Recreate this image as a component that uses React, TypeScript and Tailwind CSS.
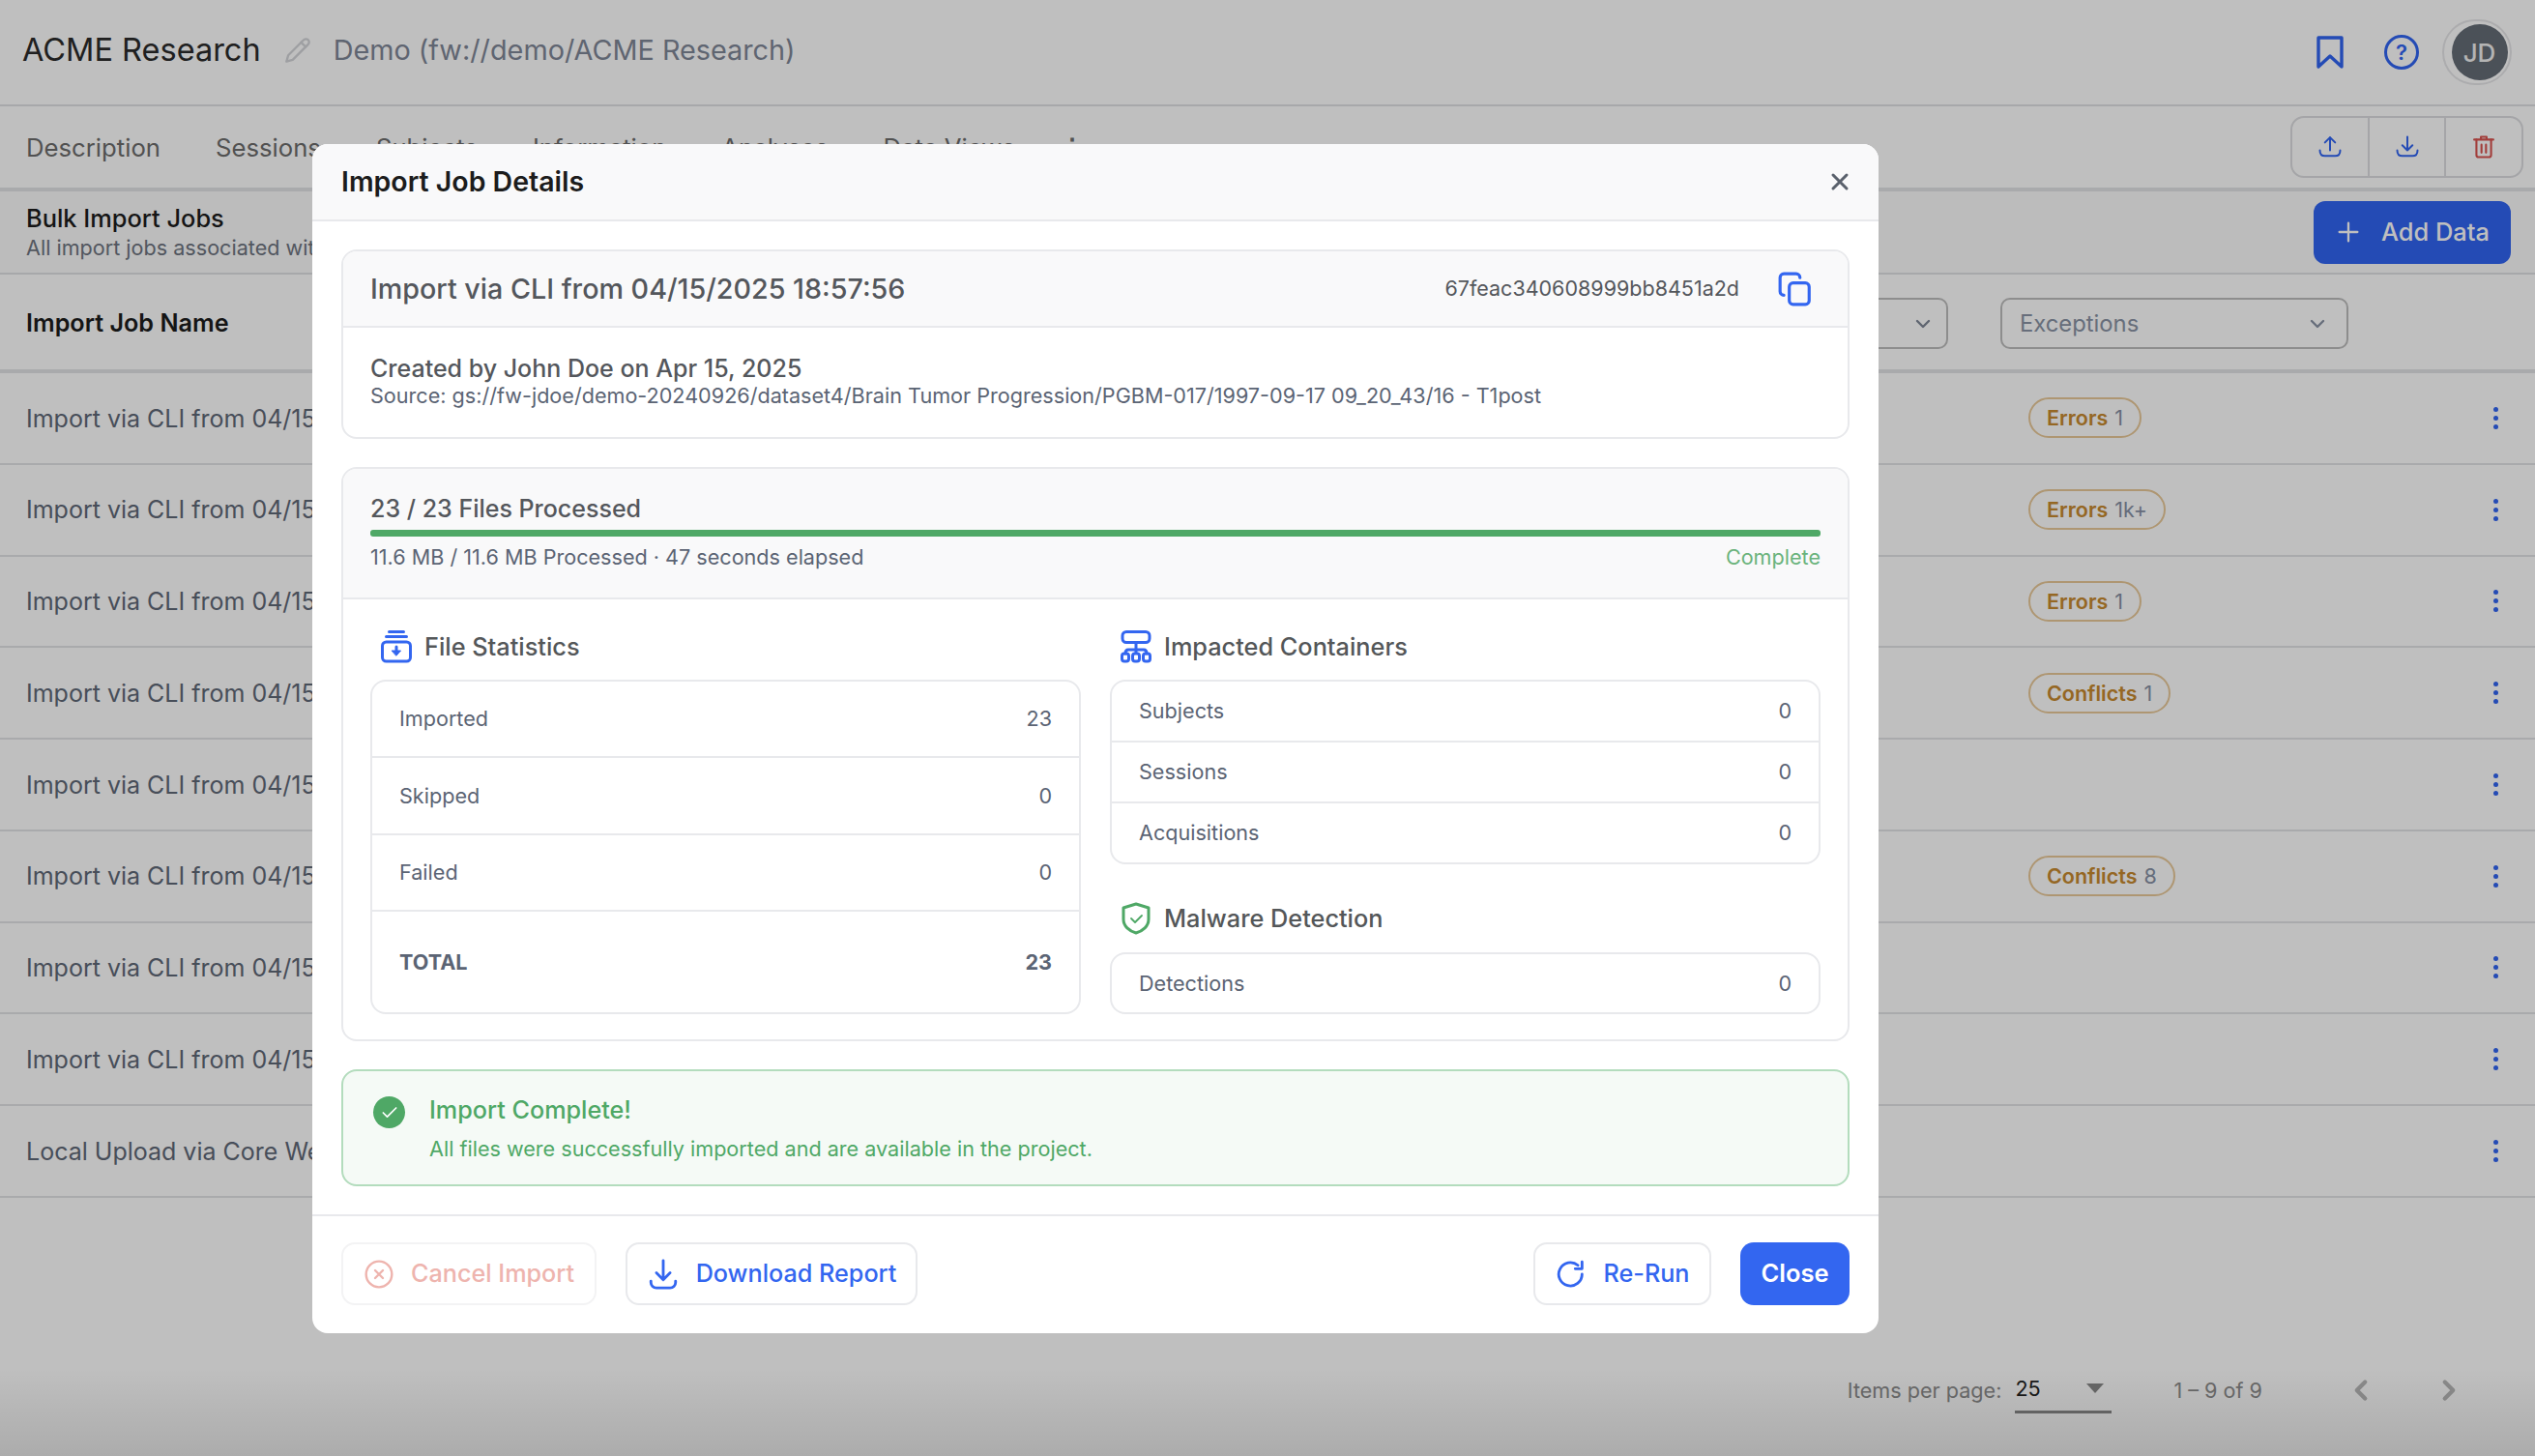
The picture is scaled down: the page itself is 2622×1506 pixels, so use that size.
import React from "react";

const font = { fontFamily: "Inter, 'Noto Sans', sans-serif" };

function Icon({ size, className, children, sw = 2, vb = "0 0 24 24" }: { size: number; className?: string; children: React.ReactNode; sw?: number; vb?: string }) {
  return (
    <svg width={size} height={size} viewBox={vb} fill="none" stroke="currentColor" strokeWidth={sw} strokeLinecap="round" strokeLinejoin="round" className={className}>
      {children}
    </svg>
  );
}

const jobRows: { name: string; badge?: [string, string] }[] = [
  { name: "Import via CLI from 04/15/2025 18:57:56", badge: ["Errors", "1"] },
  { name: "Import via CLI from 04/15/2025 18:42:10", badge: ["Errors", "1k+"] },
  { name: "Import via CLI from 04/15/2025 18:30:02", badge: ["Errors", "1"] },
  { name: "Import via CLI from 04/15/2025 18:12:47", badge: ["Conflicts", "1"] },
  { name: "Import via CLI from 04/15/2025 17:58:33" },
  { name: "Import via CLI from 04/15/2025 17:41:20", badge: ["Conflicts", "8"] },
  { name: "Import via CLI from 04/15/2025 17:22:05" },
  { name: "Import via CLI from 04/15/2025 17:03:51" },
  { name: "Local Upload via Core Web 04/15/2025" },
];

function Kebab() {
  return (
    <span className="flex flex-col gap-[4px] items-center w-[6px]">
      <span className="w-[5px] h-[5px] rounded-full bg-[#3164f2]" />
      <span className="w-[5px] h-[5px] rounded-full bg-[#3164f2]" />
      <span className="w-[5px] h-[5px] rounded-full bg-[#3164f2]" />
    </span>
  );
}

function StatRow({ label, value, h, bold, last }: { label: string; value: string; h: string; bold?: boolean; last?: boolean }) {
  return (
    <div className={`flex items-center justify-between px-[28px] text-[21.6px] text-[#5b6474] ${h} ${last ? "" : "border-b-2 border-[#e8e9ec]"} ${bold ? "font-bold" : ""}`}>
      <span>{label}</span>
      <span>{value}</span>
    </div>
  );
}

function SectionTitle({ icon, title }: { icon: React.ReactNode; title: string }) {
  return (
    <div className="flex items-center h-[34px] gap-[12px] pl-[10px]">
      <span className="w-[34px] flex justify-center">{icon}</span>
      <span className="text-[25.3px] font-medium text-[#545759]">{title}</span>
    </div>
  );
}

export default function App() {
  return (
    <div style={font} className="relative flex flex-col w-[2622px] h-[1506px] overflow-hidden bg-white">
      {/* Page behind the dialog */}
      <div className="flex items-center h-[110px] border-b-2 border-[#dfe0e3] pl-[23px] pr-[24px] pb-[4px]">
        <span className="text-[32.5px] text-[#2b2b2b]">ACME Research</span>
        <span className="ml-[24px] text-[#d3d5d9]">
          <Icon size={28} sw={2}>
            <path d="M17 3a2.85 2.83 0 1 1 4 4L7.5 20.5 2 22l1.5-5.5Z" />
            <path d="m15 5 4 4" />
          </Icon>
        </span>
        <span className="ml-[23px] text-[28.8px] text-[#7f8797]">Demo (fw://demo/ACME Research)</span>
        <div className="ml-auto flex items-center pt-[4px]">
          <svg width="30" height="34" viewBox="0 0 30 34" fill="none" stroke="#3164f2" strokeWidth="3.4" strokeLinejoin="round">
            <path d="M3 2h24v30L15 21 3 32Z" />
          </svg>
          <span className="ml-[41px] w-[36px] h-[36px] rounded-full border-[3.4px] border-[#3164f2] flex items-center justify-center text-[22px] font-semibold text-[#3164f2]">?</span>
          <span className="ml-[24px] w-[72px] h-[68px] rounded-full border-2 border-[#e6e6e8] flex items-center justify-center pl-[5px]">
            <span className="w-[58px] h-[58px] rounded-full bg-[#646c76] flex items-center justify-center text-[26px] font-medium text-[#f0f0f0]">JD</span>
          </span>
        </div>
      </div>

      <div className="flex items-center h-[88px] border-b-4 border-[#e2e3e6] pl-[27px] pr-[12px]">
        <div className="flex items-center text-[25.7px] text-[#6d6d6d] pt-[3px]">
          <span>Description</span>
          <span className="ml-[57px]">Sessions</span>
          <span className="ml-[57px]">Subjects</span>
          <span className="ml-[57px]">Information</span>
          <span className="ml-[57px]">Analyses</span>
          <span className="ml-[57px]">Data Views</span>
          <span className="ml-[46px] font-bold">⋮</span>
        </div>
        <div className="ml-auto flex h-[64px] w-[241px] rounded-[14px] border-2 border-[#dcdde0]">
          <span className="flex-1 flex items-center justify-center text-[#3164f2]">
            <Icon size={28} sw={1.7}>
              <path d="M12 15V3.5M7.5 8 12 3.5 16.500 8" />
              <path d="M3 15c0 3 1.500 5 4.500 5h9c3 0 4.500-2 4.500-5" />
            </Icon>
          </span>
          <span className="flex-1 flex items-center justify-center text-[#3164f2] border-x-2 border-[#dcdde0]">
            <Icon size={28} sw={1.7}>
              <path d="M12 3v12M7.500 10.500 12 15l4.500-4.500" />
              <path d="M3 15c0 3 1.500 5 4.500 5h9c3 0 4.500-2 4.500-5" />
            </Icon>
          </span>
          <span className="flex-1 flex items-center justify-center text-[#d9534f]">
            <Icon size={28} sw={1.8}>
              <path d="M3.500 5.500h17M9.500 5.500V3h5v2.500" />
              <path d="M5.500 5.500V19a2 2 0 0 0 2 2h9a2 2 0 0 0 2-2V5.500" />
              <path d="M10 10v7M14 10v7" />
            </Icon>
          </span>
        </div>
      </div>

      <div className="flex items-center justify-between h-[86px] border-b-2 border-[#dfe0e3] pl-[27px] pr-[25px] bg-[#fbfbfb]">
        <div className="flex flex-col">
          <span className="text-[25.4px] leading-[32px] font-medium text-[#1d1d1d]">Bulk Import Jobs</span>
          <span className="text-[21.6px] leading-[28px] text-[#6e7480]">All import jobs associated with this project</span>
        </div>
        <span className="flex items-center justify-center gap-[20px] w-[204px] h-[65px] rounded-[12px] bg-[#3164f2] text-[25.4px] font-medium text-white">
          <Icon size={28} sw={2}>
            <path d="M12 4v16M4 12h16" />
          </Icon>
          Add Data
        </span>
      </div>

      <div className="flex items-center h-[102px] border-b-4 border-[#e2e3e6] pl-[27px] pt-[3px]">
        <span className="text-[25.2px] font-semibold text-[#1d1d1d]">Import Job Name</span>
        <span className="ml-auto flex items-center justify-end w-[300px] h-[53px] rounded-[10px] border-2 border-[#bdbdbd] pr-[12px] text-[#7f8797]">
          <Icon size={24} sw={2.4}><path d="m6 9 6 6 6-6" /></Icon>
        </span>
        <span className="ml-[54px] mr-[193px] flex items-center justify-between w-[360px] h-[53px] rounded-[10px] border-2 border-[#bdbdbd] pl-[18px] pr-[18px] text-[23.8px] text-[#8a93a4]">
          Exceptions
          <Icon size={24} sw={2.4}><path d="m6 9 6 6 6-6" /></Icon>
        </span>
      </div>

      <div className="flex flex-col">
        {jobRows.map((r) => (
          <div key={r.name} className="flex items-center h-[94.75px] border-b-2 border-[#e2e3e6] pl-[27px]">
            <span className="text-[25px] text-[#5f6877] pt-[2px]">{r.name}</span>
            {r.badge && (
              <span className="absolute left-[2098px] flex items-center h-[42px] px-[17px] gap-[7px] rounded-full border-2 border-[#e9c999] text-[21.5px]">
                <span className="font-semibold text-[#c78a2f]">{r.badge[0]}</span>
                <span className="text-[#8791a4]">{r.badge[1]}</span>
              </span>
            )}
            <span className="ml-auto mr-[38px]"><Kebab /></span>
          </div>
        ))}
      </div>

      <div className="flex items-center justify-end h-[60px] mt-auto mb-[38px] text-[21.6px] text-[#8c8c8c] pr-[72px]">
        <span>Items per page:</span>
        <span className="ml-[14px] relative w-[100px] h-[48px] text-[#222] flex items-center border-b-[3px] border-[#8a8a8a]">
          25
          <span className="absolute right-[8px] top-[17px] w-0 h-0 border-x-[9px] border-x-transparent border-t-[10px] border-t-[#8a8a8a]" />
        </span>
        <span className="ml-[64px]">1 – 9 of 9</span>
        <span className="ml-[85px] text-[#b8b8b8]"><Icon size={34} sw={3}><path d="m15 18-6-6 6-6" /></Icon></span>
        <span className="ml-[57px] text-[#b8b8b8]"><Icon size={34} sw={3}><path d="m9 18 6-6-6-6" /></Icon></span>
      </div>

      {/* Backdrop */}
      <div className="absolute inset-0 bg-black/25" />
      <div className="absolute left-0 right-0 bottom-0 h-[90px] bg-gradient-to-b from-transparent to-black/10" />

      {/* Dialog */}
      <div className="absolute left-[323px] top-[149px] w-[1620px] h-[1230px] rounded-[16px] bg-white flex flex-col overflow-hidden">
        <div className="flex items-center justify-between h-[80px] shrink-0 px-[30px] bg-[#f9f9fa] border-b-2 border-[#e8e9ec]">
          <span className="text-[28.5px] font-semibold text-[#1c1c1c]">Import Job Details</span>
          <span className="text-[#5a616c] mr-[-4px]">
            <Icon size={28} sw={2.6}><path d="M6 6l12 12M18 6 6 18" /></Icon>
          </span>
        </div>

        <div className="flex flex-col flex-1 px-[30px] pt-[29px]">
          <div className="rounded-[16px] border-2 border-[#e8e9ec] h-[196px] overflow-hidden">
            <div className="flex items-center h-[79px] bg-[#f9f9fa] border-b-2 border-[#e8e9ec] pl-[28px] pr-[35px]">
              <span className="text-[28.7px] font-medium text-[#54575c]">Import via CLI from 04/15/2025 18:57:56</span>
              <span className="ml-auto text-[21.5px] text-[#54575c]">67feac340608999bb8451a2d</span>
              <span className="ml-[39px] text-[#3366f0]">
                <Icon size={38} sw={2}>
                  <rect x="8" y="8" width="13" height="14" rx="2.5" />
                  <path d="M4.5 16A2.5 2.5 0 0 1 2 13.5V4.5A2.5 2.5 0 0 1 4.5 2h8A2.5 2.5 0 0 1 15 4.5" />
                </Icon>
              </span>
            </div>
            <div className="flex flex-col pl-[28px] pt-[27px]">
              <span className="text-[25px] leading-[30px] font-medium text-[#54575c]">Created by John Doe on Apr 15, 2025</span>
              <span className="text-[21.6px] leading-[26px] text-[#5b6474]">Source: gs://fw-jdoe/demo-20240926/dataset4/Brain Tumor Progression/PGBM-017/1997-09-17 09_20_43/16 - T1post</span>
            </div>
          </div>

          <div className="mt-[29px] rounded-[16px] border-2 border-[#e8e9ec] h-[594px] overflow-hidden">
            <div className="h-[135px] bg-[#f9f9fa] border-b-2 border-[#e8e9ec] px-[28px] pt-[23px]">
              <div className="text-[25px] leading-[36px] font-medium text-[#54575c]">23 / 23 Files Processed</div>
              <div className="mt-[4px] h-[7px] rounded-[3px] bg-[#4fa866]" />
              <div className="mt-[6px] flex justify-between text-[21.6px] leading-[30px]">
                <span className="text-[#5b6474]">11.6 MB / 11.6 MB Processed · 47 seconds elapsed</span>
                <span className="text-[#6ab37c]">Complete</span>
              </div>
            </div>
            <div className="grid grid-cols-2 gap-x-[30px] px-[28px] pt-[32px]">
              <div className="flex flex-col">
                <SectionTitle
                  title="File Statistics"
                  icon={
                    <svg width="34" height="34" viewBox="0 0 34 34" fill="none" stroke="#3366f0" strokeWidth="3" strokeLinecap="round" strokeLinejoin="round">
                      <path d="M9.500 1.500h15M6.500 6.500h21" />
                      <rect x="2.500" y="12" width="29" height="20" rx="4" />
                      <path d="M17 17v7" />
                      <path d="M12.500 21h9L17 26Z" fill="#3366f0" strokeWidth="1" />
                    </svg>
                  }
                />
                <div className="mt-[17px] h-[346px] rounded-[16px] border-2 border-[#e8e9ec] flex flex-col">
                  <StatRow label="Imported" value="23" h="h-[79px]" />
                  <StatRow label="Skipped" value="0" h="h-[80px]" />
                  <StatRow label="Failed" value="0" h="h-[79px]" />
                  <StatRow label="TOTAL" value="23" h="h-[104px]" bold last />
                </div>
              </div>
              <div className="flex flex-col">
                <SectionTitle
                  title="Impacted Containers"
                  icon={
                    <svg width="34" height="34" viewBox="0 0 34 34" fill="none" stroke="#3366f0" strokeWidth="3" strokeLinecap="round" strokeLinejoin="round">
                      <rect x="3" y="1.500" width="28" height="11" rx="4" />
                      <path d="M17 12.500v11M6 24c0-2.500 1-4 3-4h16c2 0 3 1.500 3 4" />
                      <rect x="2.500" y="24" width="7" height="8" rx="2.500" />
                      <rect x="13.500" y="24" width="7" height="8" rx="2.500" />
                      <rect x="24.500" y="24" width="7" height="8" rx="2.500" />
                    </svg>
                  }
                />
                <div className="mt-[17px] h-[191px] rounded-[16px] border-2 border-[#e8e9ec] flex flex-col">
                  <StatRow label="Subjects" value="0" h="h-[63px]" />
                  <StatRow label="Sessions" value="0" h="h-[63px]" />
                  <StatRow label="Acquisitions" value="0" h="h-[61px]" last />
                </div>
                <div className="mt-[39px]">
                  <SectionTitle
                    title="Malware Detection"
                    icon={
                      <svg width="32" height="34" viewBox="0 0 32 34" fill="none" stroke="#4fa866" strokeWidth="3" strokeLinecap="round" strokeLinejoin="round">
                        <path d="M16 2 29 6v12c0 7-6 12-13 14C9 30 3 25 3 18V6Z" />
                        <path d="m11 17 4 4 7-7" strokeWidth="1.8" />
                      </svg>
                    }
                  />
                </div>
                <div className="mt-[18px] h-[64px] rounded-[16px] border-2 border-[#e8e9ec] flex flex-col">
                  <StatRow label="Detections" value="0" h="h-[60px]" last />
                </div>
              </div>
            </div>
          </div>

          <div className="mt-[29px] h-[121px] rounded-[16px] border-2 border-[#b3dcbd] bg-[#f5faf6] flex pl-[31px]">
            <span className="mt-[26px] w-[33px] h-[33px] rounded-full bg-[#4fa866] flex items-center justify-center text-white">
              <Icon size={20} sw={2}><path d="M20 6 9 17l-5-5" /></Icon>
            </span>
            <div className="ml-[25px] flex flex-col pt-[24px]">
              <span className="text-[25.2px] leading-[32px] font-medium text-[#4fa866]">Import Complete!</span>
              <span className="mt-[10px] text-[21.6px] leading-[28px] text-[#4fa866]">All files were successfully imported and are available in the project.</span>
            </div>
          </div>
        </div>

        <div className="flex items-start h-[123px] shrink-0 border-t-2 border-[#e8e9ec] px-[30px] pt-[27px]">
          <span className="flex items-center justify-center gap-[17px] w-[264px] h-[65px] rounded-[14px] border-2 border-[#f3f3f4] text-[25.2px] font-medium text-[#eeb4ae]">
            <Icon size={32} sw={1.8}><circle cx="12" cy="12" r="10" /><path d="m9 9 6 6M15 9l-6 6" /></Icon>
            Cancel Import
          </span>
          <span className="ml-[30px] flex items-center justify-center gap-[17px] w-[302px] h-[65px] rounded-[14px] border-2 border-[#e8e9ec] text-[25.2px] font-medium text-[#3366f0]">
            <Icon size={34} sw={2}>
              <path d="M12 2v14M7 11l5 5 5-5" />
              <path d="M3 17v1a4 4 0 0 0 4 4h10a4 4 0 0 0 4-4v-1" />
            </Icon>
            Download Report
          </span>
          <span className="ml-auto flex items-center justify-center gap-[16px] w-[184px] h-[65px] rounded-[14px] border-2 border-[#e8e9ec] text-[25.2px] font-medium text-[#3366f0]">
            <Icon size={34} sw={2}>
              <path d="M20 12a8.5 8.5 0 1 1-3-6.5" />
              <path d="M20 3v5h-5" />
            </Icon>
            Re-Run
          </span>
          <span className="ml-[30px] flex items-center justify-center w-[113px] h-[65px] rounded-[14px] bg-[#3366f0] text-[25.5px] font-semibold text-white">Close</span>
        </div>
      </div>
    </div>
  );
}
